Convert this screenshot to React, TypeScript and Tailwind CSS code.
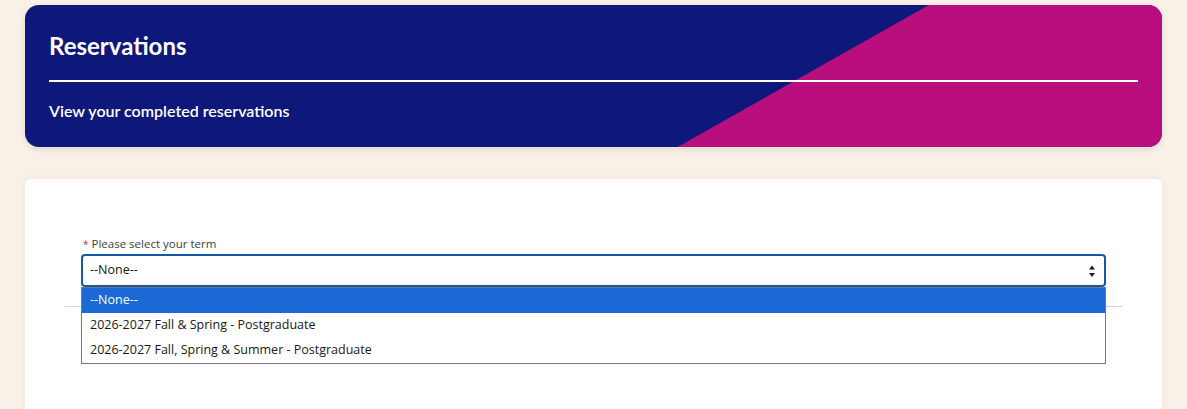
import React from 'react';

const terms = [
  '--None--',
  '2026-2027 Fall & Spring - Postgraduate',
  '2026-2027 Fall, Spring & Summer - Postgraduate',
];

function SelectArrows() {
  return (
    <svg width="8" height="14" viewBox="0 0 8 14" className="text-[#1b1b1b]">
      <path d="M4 1.5 L7 5.5 L1 5.5 Z" fill="currentColor" />
      <path d="M4 13 L7 9 L1 9 Z" fill="currentColor" />
    </svg>
  );
}

export default function App() {
  return (
    <div className="min-h-[409px] bg-[#f9f1e7] px-[25px] pt-[5px]" style={{ fontFamily: 'Lato, sans-serif' }}>
      <div className="relative h-[142px] overflow-hidden rounded-[14px] bg-[#0d187a] shadow-[0_2px_6px_rgba(0,0,0,0.12)]">
        <svg className="absolute inset-0 h-full w-full" viewBox="0 0 1136 142" preserveAspectRatio="none">
          <polygon points="903,0 1136,0 1136,142 652,142" fill="#b80e7e" />
        </svg>
        <div className="relative px-[24px] pt-[27px]">
          <h1 className="text-[24px] leading-[28px] font-bold text-white">Reservations</h1>
          <div className="mt-[20px] h-[2px] bg-white" />
          <p className="mt-[19px] text-[16px] leading-[20px] font-semibold text-white">
            View your completed reservations
          </p>
        </div>
      </div>

      <div className="mt-[32px] h-[240px] rounded-[6px] bg-white px-[56px] pt-[57px] shadow-[0_0_8px_rgba(0,0,0,0.05)]">
        <div className="relative" style={{ fontFamily: '"Open Sans", sans-serif' }}>
          <label className="flex items-start pl-[2px] text-[11.5px] leading-[16px] text-[#3e3e3c]">
            <span className="mr-[3px] text-[10px] text-[#c23934]">*</span>
            Please select your term
          </label>
          <div className="mt-[2px] flex h-[33px] items-center justify-between rounded-[4px] border-2 border-[#1558a8] pr-[8px] pl-[7px] text-[12.5px] text-[#181818]">
            <span>--None--</span>
            <SelectArrows />
          </div>
          <div className="mx-[-16px] mt-[19px] h-px bg-[#d4d4d4]" />
          <ul className="absolute top-[51px] left-0 right-0 border border-[#767676] bg-white text-[12.5px] text-[#181818]">
            {terms.map((t, i) => (
              <li
                key={t}
                className={`flex h-[25px] items-center pl-[8px] ${i === 0 ? 'bg-[#1a69d4] text-white' : ''}`}
              >
                {t}
              </li>
            ))}
          </ul>
        </div>
      </div>
    </div>
  );
}
